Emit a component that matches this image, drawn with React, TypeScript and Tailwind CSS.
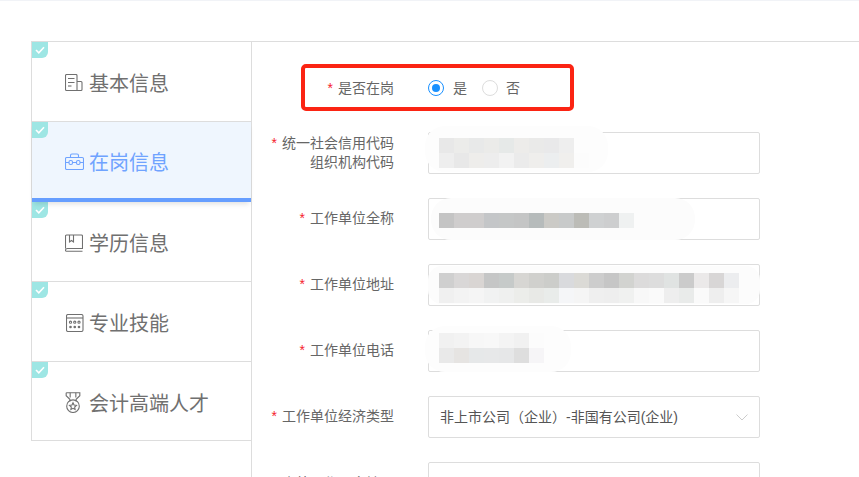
import type { ReactNode } from 'react';

const mosaicTel = [
  ['#f1f1f1', '#f3f3f3', '#f7f7f7', '#f8f8f8', '#f4f4f4', '#f1f1f1', '#fcfcfc'],
  ['#e9e9e9', '#e6e4e2', '#e6e8e9', '#e7e8e9', '#e6e7e8', '#dedede', '#f6f5f7'],
];
const mosaicCode = [
  ['#e8e8e8', '#ececea', '#e8e9e9', '#ebebe9', '#e6e9e8', '#edecea', '#eaeae9', '#e9e9ea', '#eeeeee'],
  ['#eeeeee', '#e8e8e8', '#eeedeb', '#ededed', '#f2f2f2', '#ebebeb', '#efeeec', '#eceeef', '#f0efed', '#fcfcfc'],
];
const mosaicName = [
  ['#c4c4c4', '#cfcdcd', '#cfcdcd', '#c4c6c8', '#c5c7c7', '#c4c5c5', '#b6bbbb', '#cbcac6', '#c8caca', '#bcbcb7', '#cfd1d2', '#cdcecf', '#eff1f1'],
];
const mosaicAddr = [
  ['#cfcfcf', '#d9d7d7', '#d9d5d3', '#c5c6c6', '#c6cac9', '#d7d6d3', '#d0d0cd', '#cccdca', '#d9dadd', '#dbdad6', '#cdcdcd', '#c6c6c6', '#d2d3d0', '#dcdbdb', '#dddddd', '#e0e3e2', '#cbcbcb', '#ebe9e9', '#d8d6d6', '#ecedef'],
  ['#f0f0f0', '#f3f3f3', '#f5f5f5', '#f1f2f2', '#eff0ef', '#ecedea', '#e8e9e6', '#e9ecea', '#f5f6f8', '#f5f5f5', '#efefef', '#eeeeee', '#f0f1f0', '#f8f8f8', '#fafafa', '#eeeeee', '#e9ebea', '#fafafa', '#eeeeee', '#f6f6f6'],
];

function Mosaic({ rows }: { rows: string[][] }) {
  return (
    <div className="flex flex-col">
      {rows.map((row, i) => (
        <div key={i} className="flex h-[15px]">
          {row.map((c, j) => (
            <div key={j} className="h-full w-[15px]" style={{ backgroundColor: c }} />
          ))}
        </div>
      ))}
    </div>
  );
}

function DocIcon() {
  return (
    <svg width="18" height="18" viewBox="0 0 18 18" fill="none" stroke="currentColor" strokeWidth="1.1">
      <path d="M12 16.500H1.500a1 1 0 0 1-1-1V1.500a1 1 0 0 1 1-1H11a1 1 0 0 1 1 1v15z" />
      <path d="M12 7.500h4a1 1 0 0 1 1 1v7a1 1 0 0 1-1 1h-4" />
      <path d="M3 4.500h6.500M3 8.500h6.500" />
      <path d="M3 12h3.500" />
    </svg>
  );
}

function CaseIcon() {
  return (
    <svg width="19" height="18" viewBox="0 0 19 18" fill="none" stroke="currentColor" strokeWidth="1.1">
      <path d="M1.700 4.500h15.600a1.200 1.200 0 0 1 1.200 1.200v9.600a1.200 1.200 0 0 1-1.200 1.200H1.700a1.200 1.200 0 0 1-1.200-1.200V5.700a1.200 1.200 0 0 1 1.200-1.200z" />
      <path d="M5.500 4.500V2.500a1.500 1.500 0 0 1 1.500-1.500h5a1.500 1.500 0 0 1 1.500 1.500v2" />
      <path d="M.5 9.500h3.500M7.500 9.500h4M15 9.500h3.500" />
      <rect x="4" y="7.500" width="3.500" height="4" rx="1.500" />
      <rect x="11.500" y="7.500" width="3.500" height="4" rx="1.500" />
    </svg>
  );
}

function BookIcon() {
  return (
    <svg width="18" height="18" viewBox="0 0 18 18" fill="none" stroke="currentColor" strokeWidth="1.1">
      <path d="M.5 14.500V2a1 1 0 0 1 1-1h15a1 1 0 0 1 1 1v12.500H2.500a2 2 0 0 0-2 2 1 1 0 0 0 1 .8h16" />
      <path d="M4.500 1v7l2-1.500 2 1.500V1" />
    </svg>
  );
}

function CalcIcon() {
  return (
    <svg width="18" height="18" viewBox="0 0 18 18" fill="none" stroke="currentColor" strokeWidth="1.1" className="ml-[1px]">
      <rect x=".5" y=".5" width="16.500" height="17" rx="1.500" />
      <path d="M.5 4h16.500" />
      {[4.5, 8.75, 13].map((x) => (
        <g key={x}>
          <circle cx={x} cy="8.200" r="1.100" />
          <circle cx={x} cy="13" r="1.300" fill="currentColor" stroke="none" />
        </g>
      ))}
    </svg>
  );
}

function MedalIcon() {
  return (
    <svg width="16" height="21" viewBox="0 0 15 20" fill="none" stroke="currentColor" strokeWidth="1.05">
      <path d="M1 .7h13v2.800l-3.500 3.500v2M1 .7v2.800l3.500 3.500v2" />
      <path d="M4.800 .7v4.500M10.200 .7v4.500" />
      <circle cx="7.500" cy="13.500" r="6" />
      <path d="M7.500 10.300l1 2.100 2.300.3-1.700 1.600.4 2.300-2-1.100-2 1.100.4-2.300-1.700-1.600 2.300-.3z" />
    </svg>
  );
}

const tabs: { label: string; icon: ReactNode; active?: boolean; last?: boolean }[] = [
  { label: '基本信息', icon: <DocIcon /> },
  { label: '在岗信息', icon: <CaseIcon />, active: true },
  { label: '学历信息', icon: <BookIcon /> },
  { label: '专业技能', icon: <CalcIcon /> },
  { label: '会计高端人才', icon: <MedalIcon />, last: true },
];

function Tab({ label, icon, active, last }: { label: string; icon: ReactNode; active?: boolean; last?: boolean }) {
  return (
    <div
      className={
        active
          ? 'relative z-10 flex h-20 items-center bg-[#eff6fe] pb-[3px] pl-[33px] text-[#6fa3ff] shadow-[0_4px_5px_-2px_rgba(0,0,0,0.12)]'
          : last
            ? 'relative flex h-[79px] items-center border-b border-[#dddddd] pl-[33px] text-[#707070]'
            : 'relative flex h-20 items-center border-b border-[#dddddd] pl-[33px] text-[#707070]'
      }
    >
      <div className="absolute top-0 left-0 flex h-4 w-4 items-center justify-center rounded-br-[6px] bg-[#9ee6e4]">
        <svg width="10" height="8" viewBox="0 0 10 8" fill="none" stroke="#ffffff" strokeWidth="1.6">
          <path d="M1 4l2.800 2.800L9 1.200" />
        </svg>
      </div>
      <span className="flex w-[24px] shrink-0 items-center pt-[2px]">{icon}</span>
      <span className="pt-[5px] text-[20px] leading-none">{label}</span>
      {active ? <div className="absolute right-0 bottom-0 left-0 h-1 bg-[#669eff]" /> : null}
    </div>
  );
}

function Field({
  label,
  required = true,
  raised = true,
  children,
}: {
  label: ReactNode;
  required?: boolean;
  raised?: boolean;
  children?: ReactNode;
}) {
  return (
    <div className="mb-6 flex h-[42px] items-center gap-[34px]">
      <div className={raised ? 'w-[142px] shrink-0 pb-[2px] text-right text-[14px] leading-[19px] text-[#666666]' : 'w-[142px] shrink-0 text-right text-[14px] leading-[19px] text-[#666666]'}>
        {required ? <span className="mr-[5px] text-[#f5222d]">*</span> : null}
        {label}
      </div>
      <div className="relative h-[42px] w-[332px] rounded-[2px] border border-[#dddddd] bg-white">{children}</div>
    </div>
  );
}

function Blur({ className, rows }: { className: string; rows: string[][] }) {
  return (
    <div className={className}>
      <Mosaic rows={rows} />
    </div>
  );
}

export default function App() {
  return (
    <div className="h-[477px] w-[859px] overflow-hidden bg-white font-['Liberation_Sans','Noto_Sans_CJK_SC',sans-serif]">
      <div className="h-[41px] border-t border-[#f1f3f7]" />
      <div className="ml-[31px] flex h-[436px] items-start border-t border-[#dddddd]">
        <div className="w-[220px] shrink-0 border-l border-[#dddddd]">
          {tabs.map((t) => (
            <Tab key={t.label} {...t} />
          ))}
        </div>
        <div className="h-full flex-1 border-l border-[#dddddd] pt-6">
          <div className="relative mb-6 flex h-[42px] items-center gap-[34px]">
            <div className="w-[142px] shrink-0 pt-[2px] text-right text-[14px] leading-[19px] text-[#666666]">
              <span className="mr-[5px] text-[#f5222d]">*</span>
              是否在岗
            </div>
            <div className="flex items-center pt-[2px] text-[14px] text-[#666666]">
              <span className="flex h-4 w-4 items-center justify-center rounded-full border border-[#1890ff]">
                <span className="h-2 w-2 rounded-full bg-[#1890ff]" />
              </span>
              <span className="ml-[9px]">是</span>
              <span className="ml-[15px] h-4 w-4 rounded-full border border-[#dddddd]" />
              <span className="ml-2">否</span>
            </div>
            <div className="absolute top-[-2px] left-[49px] h-[47px] w-[273px] rounded-[5px] border-[4px] border-[#fb2413]" />
          </div>

          <Field
            raised={false}
            label={
              <>
                统一社会信用代码
                <br />
                组织机构代码
              </>
            }
          >
            <div className="absolute top-[-7px] left-[-4px] h-[46px] w-[183px] rounded-[20px] bg-[#fdfdfd]" />
            <Blur className="absolute top-[5px] left-[10px]" rows={mosaicCode} />
          </Field>
          <Field label="工作单位全称">
            <div className="absolute top-[-1px] left-[2px] h-[42px] w-[264px] rounded-[20px] bg-[#fcfcfc]" />
            <Blur className="absolute top-[14px] left-[10px]" rows={mosaicName} />
          </Field>
          <Field label="工作单位地址">
            <div className="absolute top-[1px] left-[-1px] h-[38px] w-[332px] rounded-[14px] bg-[#fcfcfc]" />
            <Blur className="absolute top-2 left-[10px]" rows={mosaicAddr} />
          </Field>
          <Field label="工作单位电话">
            <div className="absolute top-[-5px] left-[-4px] h-[46px] w-[146px] rounded-[20px] bg-[#fdfdfd]" />
            <Blur className="absolute top-[2px] left-[10px]" rows={mosaicTel} />
          </Field>
          <Field label="工作单位经济类型">
            <div className="flex h-full items-center justify-between pr-[11px] pl-[11px] text-[14px] text-[#555555]">
              <span>非上市公司（企业）-非国有公司(企业)</span>
              <svg width="12" height="7" viewBox="0 0 12 7" fill="none" stroke="#cccccc" strokeWidth="1">
                <path d="M.5 .5L6 6l5.500-5.500" />
              </svg>
            </div>
          </Field>
          <Field label="国内外工作国家地区" required={false} raised={false} />
        </div>
      </div>
    </div>
  );
}
